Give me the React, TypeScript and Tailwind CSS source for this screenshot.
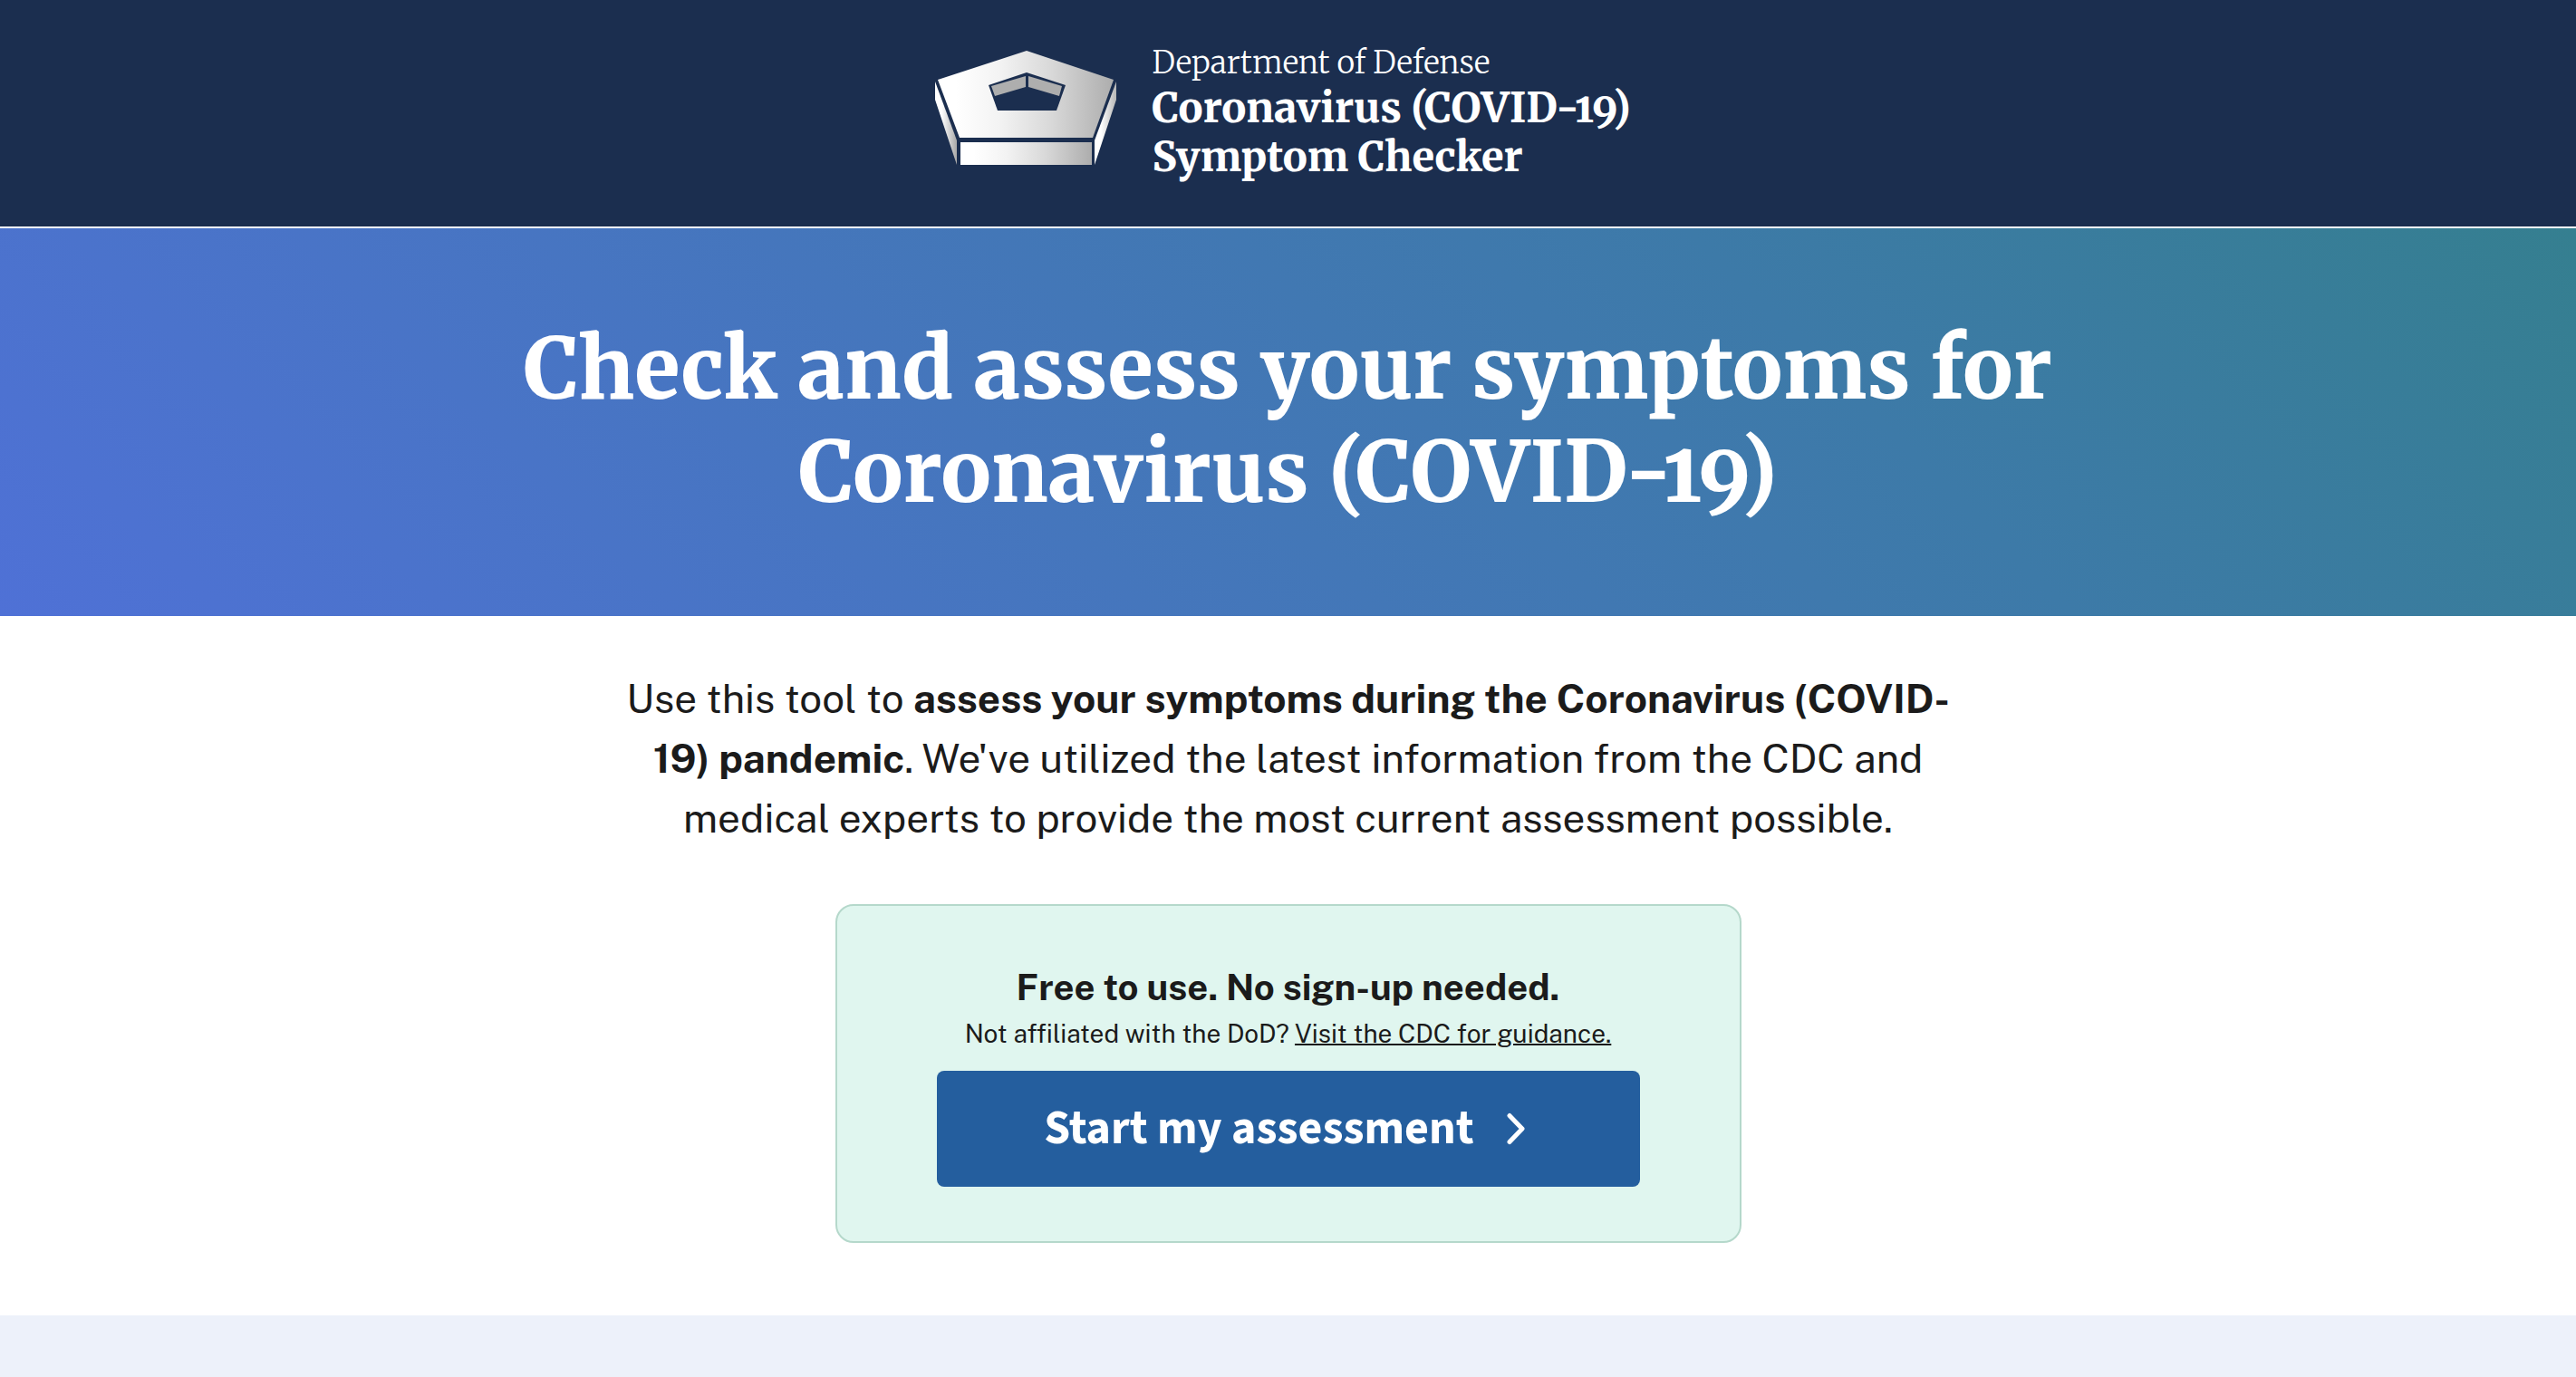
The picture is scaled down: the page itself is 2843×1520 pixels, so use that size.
import React from "react";

function PentagonLogo() {
  return (
    <svg className="mt-2.5 h-32 w-50 shrink-0" viewBox="0 0 200 128" role="img" aria-label="Pentagon">
      <defs>
        <linearGradient id="silver" x1="0" x2="1" y1="0" y2="0">
          <stop offset="0.1" stopColor="#ffffff" />
          <stop offset="0.35" stopColor="#f3f3f3" />
          <stop offset="0.65" stopColor="#d8d8d8" />
          <stop offset="1" stopColor="#adadad" />
        </linearGradient>
        <linearGradient id="leftSide" x1="0" x2="1" y1="0" y2="0">
          <stop offset="0.3" stopColor="#ffffff" />
          <stop offset="1" stopColor="#a8a8a8" />
        </linearGradient>
        <linearGradient id="rightSide" x1="0" x2="1" y1="0" y2="0">
          <stop offset="0.3" stopColor="#ffffff" />
          <stop offset="1" stopColor="#b5b5b5" />
        </linearGradient>
      </defs>
      <path d="M101 0 197 32 174 96H27L3 32Z" fill="url(#silver)" />
      <path d="M101 24 144 38 134 66H69L59 38Z" fill="#1b2e4f" />
      <path d="M100 28V40L66 50 62 39ZM103 28V40L137 50 140 39Z" fill="#aeaeae" />
      <path d="M28 101H173V126H28Z" fill="url(#silver)" />
      <path d="M0 34 24 99V126L0 54Z" fill="url(#leftSide)" />
      <path d="M200 34 176 99V126L200 54Z" fill="url(#rightSide)" />
    </svg>
  );
}

export default function App() {
  return (
    <div className="min-h-screen bg-white font-['Public_Sans','Inter',sans-serif] text-[#1b1b1b]">
      <header className="flex items-start justify-center gap-10 border-b-2 border-white bg-[#1b2e4f] pt-[46px] pb-[50px] font-['Merriweather','DejaVu_Serif_Condensed','DejaVu_Serif',serif] text-white">
        <PentagonLogo />
        <div className="min-w-[540px] text-[45px] leading-[54px] font-extrabold oldstyle-nums">
          <p className="text-[34px] leading-[46px] font-light">Department of Defense</p>
          <p>Coronavirus (COVID-19)</p>
          <p>Symptom Checker</p>
        </div>
      </header>
      <main>
        <section className="bg-linear-[45deg,#4f71d6,#3d7aa8_70%,#357f90] px-8 pt-[98px] pb-[102px]">
          <h1 className="mx-auto max-w-[1800px] text-center font-['Merriweather','DejaVu_Serif_Condensed','DejaVu_Serif',serif] text-[92px] leading-[114px] font-extrabold oldstyle-nums text-white">
            Check and assess your symptoms for Coronavirus (COVID-19)
          </h1>
        </section>
        <section className="flex flex-col items-center px-8 pt-[58px] pb-20">
          <p className="max-w-[1500px] text-center text-[44px] leading-[66px]">
            Use this tool to <strong>assess your symptoms during the Coronavirus (COVID-19) pandemic</strong>. We've utilized
            the latest information from the CDC and medical experts to provide the most current assessment possible.
          </p>
          <div className="mt-[62px] w-full max-w-[1000px] rounded-[20px] border-2 border-[#b5d8cb] bg-[#e0f6ef] px-[110px] py-15 text-center">
            <h2 className="text-[40px] leading-[60px] font-bold">Free to use. No sign-up needed.</h2>
            <p className="text-[28px] leading-[42px]">
              Not affiliated with the DoD?{" "}
              <a href="#guidance" className="underline decoration-2">
                Visit the CDC for guidance.
              </a>
            </p>
            <button
              type="button"
              className="mt-5 flex h-32 w-full items-center justify-center gap-9 rounded-lg bg-[#245e9e] pr-2 font-['Source_Sans_Pro','Source_Sans_3','Noto_Sans_CJK_SC',sans-serif] text-[52px] font-bold text-white"
            >
              Start my assessment
              <svg className="h-9 w-5" viewBox="0 0 20 36" fill="none" stroke="currentColor" strokeWidth="5" strokeLinecap="round" strokeLinejoin="round" aria-hidden="true">
                <path d="M3 3.500 17 18 3 32.500" />
              </svg>
            </button>
          </div>
        </section>
        <section className="h-17 bg-[#edf1fa]" />
      </main>
    </div>
  );
}
